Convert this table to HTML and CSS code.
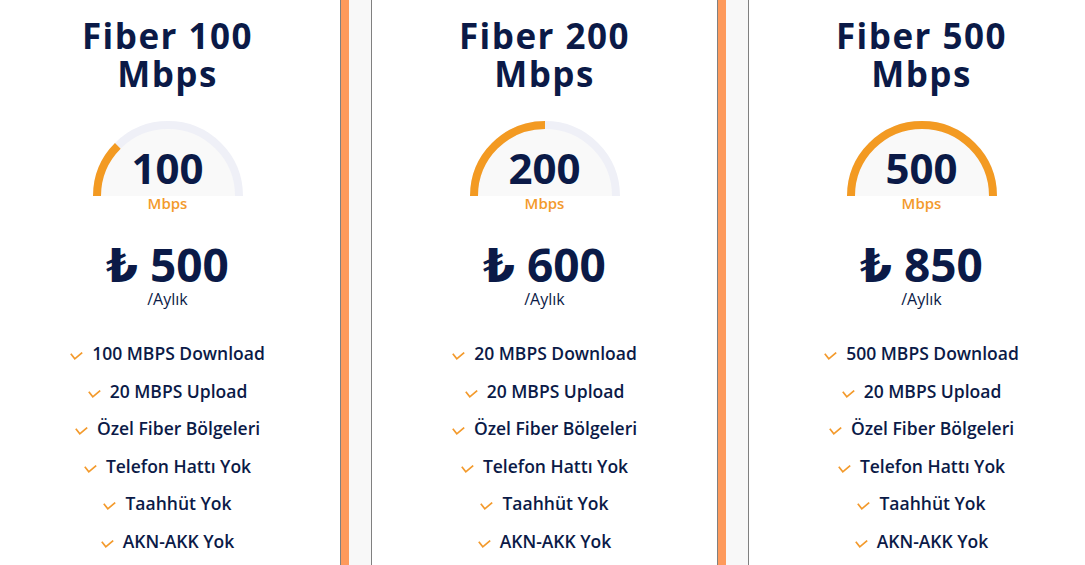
FILE: index.html
```html
<!DOCTYPE html>
<html lang="tr">
<head>
    <meta charset="UTF-8">
    <meta name="viewport" content="width=device-width, initial-scale=1.0">
    <title>Fiber Paketleri</title>
    <link rel="stylesheet" href="styles.css">
</head>
<body>

    <div class="plans">

        <!-- Fiber 100 -->
        <div class="plan">
            <h2 class="plan-title">Fiber 100 Mbps</h2>
            <div class="gauge">
                <svg class="gauge-svg" viewBox="0 0 150 76" width="150" height="76">
                    <path class="gauge-track" d="M4 75 A71 71 0 0 1 146 75"/>
                    <path class="gauge-fill" d="M4 75 A71 71 0 0 1 24.8 24.8"/>
                </svg>
                <div class="gauge-value">100</div>
            </div>
            <div class="gauge-unit">Mbps</div>
            <div class="price">₺ 500</div>
            <div class="period">/Aylık</div>
            <ul class="features">
                <li><svg class="check" viewBox="0 0 13 8" width="13" height="8"><polyline points="0.8,1.8 4.8,6.8 12.2,0.6"/></svg>100 MBPS Download</li>
                <li><svg class="check" viewBox="0 0 13 8" width="13" height="8"><polyline points="0.8,1.8 4.8,6.8 12.2,0.6"/></svg>20 MBPS Upload</li>
                <li><svg class="check" viewBox="0 0 13 8" width="13" height="8"><polyline points="0.8,1.8 4.8,6.8 12.2,0.6"/></svg>Özel Fiber Bölgeleri</li>
                <li><svg class="check" viewBox="0 0 13 8" width="13" height="8"><polyline points="0.8,1.8 4.8,6.8 12.2,0.6"/></svg>Telefon Hattı Yok</li>
                <li><svg class="check" viewBox="0 0 13 8" width="13" height="8"><polyline points="0.8,1.8 4.8,6.8 12.2,0.6"/></svg>Taahhüt Yok</li>
                <li><svg class="check" viewBox="0 0 13 8" width="13" height="8"><polyline points="0.8,1.8 4.8,6.8 12.2,0.6"/></svg>AKN-AKK Yok</li>
            </ul>
        </div>

        <!-- Fiber 200 -->
        <div class="plan">
            <h2 class="plan-title">Fiber 200 Mbps</h2>
            <div class="gauge">
                <svg class="gauge-svg" viewBox="0 0 150 76" width="150" height="76">
                    <path class="gauge-track" d="M4 75 A71 71 0 0 1 146 75"/>
                    <path class="gauge-fill" d="M4 75 A71 71 0 0 1 75 4"/>
                </svg>
                <div class="gauge-value">200</div>
            </div>
            <div class="gauge-unit">Mbps</div>
            <div class="price">₺ 600</div>
            <div class="period">/Aylık</div>
            <ul class="features">
                <li><svg class="check" viewBox="0 0 13 8" width="13" height="8"><polyline points="0.8,1.8 4.8,6.8 12.2,0.6"/></svg>20 MBPS Download</li>
                <li><svg class="check" viewBox="0 0 13 8" width="13" height="8"><polyline points="0.8,1.8 4.8,6.8 12.2,0.6"/></svg>20 MBPS Upload</li>
                <li><svg class="check" viewBox="0 0 13 8" width="13" height="8"><polyline points="0.8,1.8 4.8,6.8 12.2,0.6"/></svg>Özel Fiber Bölgeleri</li>
                <li><svg class="check" viewBox="0 0 13 8" width="13" height="8"><polyline points="0.8,1.8 4.8,6.8 12.2,0.6"/></svg>Telefon Hattı Yok</li>
                <li><svg class="check" viewBox="0 0 13 8" width="13" height="8"><polyline points="0.8,1.8 4.8,6.8 12.2,0.6"/></svg>Taahhüt Yok</li>
                <li><svg class="check" viewBox="0 0 13 8" width="13" height="8"><polyline points="0.8,1.8 4.8,6.8 12.2,0.6"/></svg>AKN-AKK Yok</li>
            </ul>
        </div>

        <!-- Fiber 500 -->
        <div class="plan">
            <h2 class="plan-title">Fiber 500 Mbps</h2>
            <div class="gauge">
                <svg class="gauge-svg" viewBox="0 0 150 76" width="150" height="76">
                    <path class="gauge-track" d="M4 75 A71 71 0 0 1 146 75"/>
                    <path class="gauge-fill" d="M4 75 A71 71 0 0 1 146 75"/>
                </svg>
                <div class="gauge-value">500</div>
            </div>
            <div class="gauge-unit">Mbps</div>
            <div class="price">₺ 850</div>
            <div class="period">/Aylık</div>
            <ul class="features">
                <li><svg class="check" viewBox="0 0 13 8" width="13" height="8"><polyline points="0.8,1.8 4.8,6.8 12.2,0.6"/></svg>500 MBPS Download</li>
                <li><svg class="check" viewBox="0 0 13 8" width="13" height="8"><polyline points="0.8,1.8 4.8,6.8 12.2,0.6"/></svg>20 MBPS Upload</li>
                <li><svg class="check" viewBox="0 0 13 8" width="13" height="8"><polyline points="0.8,1.8 4.8,6.8 12.2,0.6"/></svg>Özel Fiber Bölgeleri</li>
                <li><svg class="check" viewBox="0 0 13 8" width="13" height="8"><polyline points="0.8,1.8 4.8,6.8 12.2,0.6"/></svg>Telefon Hattı Yok</li>
                <li><svg class="check" viewBox="0 0 13 8" width="13" height="8"><polyline points="0.8,1.8 4.8,6.8 12.2,0.6"/></svg>Taahhüt Yok</li>
                <li><svg class="check" viewBox="0 0 13 8" width="13" height="8"><polyline points="0.8,1.8 4.8,6.8 12.2,0.6"/></svg>AKN-AKK Yok</li>
            </ul>
        </div>

    </div>

</body>
</html>
```

FILE: styles.css
```css
body {
    font-family: 'Open Sans', 'DejaVu Sans', sans-serif;
    background: #f8f8f8;
    color: #0b1a47;
    margin: 0;
    overflow: hidden;
}

/* Row of plan cards */
.plans {
    display: flex;
    gap: 30px;
    margin-left: -6px;
    min-height: 100vh;
}

.plan {
    flex: 0 0 347px;
    box-sizing: border-box;
    background: #fff;
    border-left: 1px solid #808080;
    border-right: 1px solid #808080;
    box-shadow: 8px 0 0 #fe9a5c;
    padding-top: 17px;
    text-align: center;
}

.plan-title {
    font-size: 35px;
    font-weight: 700;
    letter-spacing: 1.5px;
    line-height: 38px;
    margin: 0 auto;
    width: 220px;
}

/* Speed gauge */
.gauge {
    position: relative;
    width: 150px;
    height: 76px;
    margin: 28px auto 0;
}

.gauge-svg {
    display: block;
}

.gauge-track {
    fill: #f9f9f9;
    stroke: #eff0f7;
    stroke-width: 8;
}

.gauge-fill {
    fill: none;
    stroke: #f39a22;
    stroke-width: 8;
}

.gauge-value {
    position: absolute;
    left: 0;
    right: 0;
    bottom: 8px;
    font-size: 42px;
    font-weight: 700;
    line-height: 42px;
}

.gauge-unit {
    color: #f39a2c;
    font-size: 15px;
    font-weight: 600;
    line-height: 15px;
    margin-top: -1px;
}

.price {
    font-size: 46px;
    font-weight: 700;
    line-height: 46px;
    margin-top: 30px;
}

.period {
    font-size: 16px;
    font-weight: 500;
    line-height: 18px;
    margin-top: 3px;
}

.features {
    list-style: none;
    margin: 27px 0 0;
    padding: 0;
}

.features li {
    font-size: 17.5px;
    font-weight: 600;
    line-height: 37.6px;
}

.check {
    fill: none;
    stroke: #f39a2c;
    stroke-width: 1.7;
    margin-right: 9px;
    vertical-align: 0;
}
```
